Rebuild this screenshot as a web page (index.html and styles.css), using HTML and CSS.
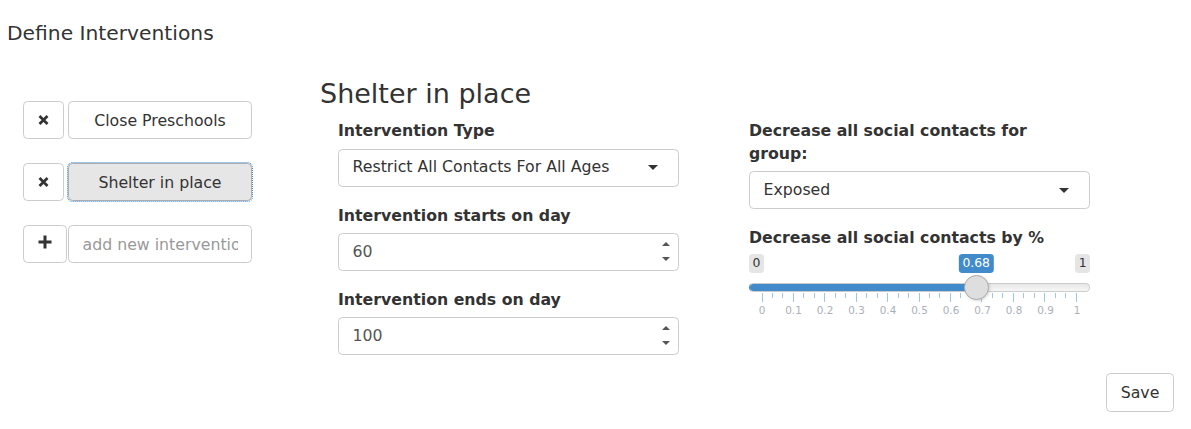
FILE: index.html
```html
<!DOCTYPE html>
<html lang="en">
<head>
<meta charset="utf-8">
<title>Define Interventions</title>
<link rel="stylesheet" href="styles.css">
</head>
<body>
<h4 class="page-title">Define Interventions</h4>
<div class="main">
  <div class="sidebar">
    <div class="row">
      <button class="btn btn-icon" type="button" aria-label="Remove">
        <svg width="11" height="10" viewBox="0 0 11 10"><path d="M1.5 1 L9.5 9 M9.5 1 L1.5 9" stroke="#333" stroke-width="2.7" fill="none"/></svg>
      </button>
      <button class="btn btn-name" type="button">Close Preschools</button>
    </div>
    <div class="row">
      <button class="btn btn-icon" type="button" aria-label="Remove">
        <svg width="11" height="10" viewBox="0 0 11 10"><path d="M1.5 1 L9.5 9 M9.5 1 L1.5 9" stroke="#333" stroke-width="2.7" fill="none"/></svg>
      </button>
      <button class="btn btn-name active" type="button">Shelter in place</button>
    </div>
    <div class="row">
      <button class="btn btn-icon btn-plus" type="button" aria-label="Add">
        <svg width="14" height="14" viewBox="0 0 14 14"><path d="M7 0.5 V13.5 M0.5 7 H13.5" stroke="#333" stroke-width="3" fill="none"/></svg>
      </button>
      <input class="new-input" type="text" placeholder="add new intervention">
    </div>
  </div>

  <div class="panel">
    <h3 class="panel-title">Shelter in place</h3>
    <div class="form">
      <div class="col">
        <div class="form-group">
          <label class="label">Intervention Type</label>
          <div class="select"><span>Restrict All Contacts For All Ages</span><span class="caret"></span></div>
        </div>
        <div class="form-group">
          <label class="label">Intervention starts on day</label>
          <div class="numbox"><input class="num-field" type="text" value="60"><span class="spin"><span class="up"></span><span class="down"></span></span></div>
        </div>
        <div class="form-group">
          <label class="label">Intervention ends on day</label>
          <div class="numbox"><input class="num-field" type="text" value="100"><span class="spin"><span class="up"></span><span class="down"></span></span></div>
        </div>
      </div>
      <div class="col">
        <div class="form-group">
          <label class="label">Decrease all social contacts for group:</label>
          <div class="select"><span>Exposed</span><span class="caret"></span></div>
        </div>
        <div class="form-group">
          <label class="label">Decrease all social contacts by %</label>
          <div class="slider" style="--v:0.68">
            <div class="minmax"><span class="irs-min">0</span><span class="irs-max">1</span></div>
            <span class="irs-single">0.68</span>
            <div class="track"><div class="bar"></div></div>
            <span class="handle"></span>
            <div class="grid">
              <i class="big"></i><i></i><i></i><i class="big"></i><i></i><i></i><i class="big"></i><i></i><i></i><i class="big"></i><i></i><i></i><i class="big"></i><i></i><i></i><i class="big"></i><i></i><i></i><i class="big"></i><i></i><i></i><i class="big"></i><i></i><i></i><i class="big"></i><i></i><i></i><i class="big"></i><i></i><i></i><i class="big"></i>
            </div>
            <div class="grid-text">
              <span><b>0</b></span><span><b>0.1</b></span><span><b>0.2</b></span><span><b>0.3</b></span><span><b>0.4</b></span><span><b>0.5</b></span><span><b>0.6</b></span><span><b>0.7</b></span><span><b>0.8</b></span><span><b>0.9</b></span><span><b>1</b></span>
            </div>
          </div>
        </div>
      </div>
    </div>
  </div>
</div>
<div class="footer">
  <button class="btn btn-save" type="button">Save</button>
</div>
</body>
</html>
```
FILE: styles.css
```css
* { box-sizing: border-box; }

body {
  margin: 0;
  font-family: "DejaVu Sans", sans-serif;
  font-size: 15.75px;
  line-height: 1.42857;
  color: #333;
  background: #fff;
}

.page-title {
  margin: 0;
  padding: 21.6px 0 0 7px;
  font-size: 20.25px;
  font-weight: 500;
  line-height: 1.1;
}

.main {
  display: flex;
  margin-top: 35.6px;
}

.sidebar {
  display: flex;
  flex-direction: column;
  gap: 23.75px;
  margin-top: 21.5px;
  padding-left: 23px;
}

.row {
  display: grid;
  grid-template-columns: 45px 184px;
  align-items: stretch;
}

.btn {
  display: inline-flex;
  align-items: center;
  justify-content: center;
  height: 38.25px;
  padding: 0 13.5px;
  font-family: inherit;
  font-size: 15.75px;
  color: #333;
  background: #fff;
  border: 1px solid #ccc;
  border-radius: 4.5px;
  cursor: pointer;
}

.btn-icon {
  width: 41px;
  padding: 0;
}

.btn-plus {
  width: 44px;
}

.btn-plus svg {
  margin-top: -5px;
}

.btn-name {
  width: 184px;
}

.btn-name.active {
  background: #e6e6e6;
  border-color: #adadad;
  outline: 1px dotted #3d8ed8;
  outline-offset: 0;
}

.new-input {
  width: 184px;
  height: 38.25px;
  padding: 0 13.5px;
  font-family: inherit;
  font-size: 15.75px;
  color: #555;
  border: 1px solid #ccc;
  border-radius: 4.5px;
}

.new-input::placeholder {
  color: #999;
}

.panel {
  margin-left: 68px;
}

.panel-title {
  margin: 0 0 11.25px;
  font-size: 27px;
  font-weight: 500;
  line-height: 1.1;
}

.form {
  display: flex;
  gap: 70px;
  padding-left: 18px;
}

.col {
  width: 341px;
}

.form-group {
  margin-bottom: 17.8px;
}

.label {
  display: block;
  margin-bottom: 5.625px;
  font-weight: bold;
}

.select {
  display: flex;
  align-items: center;
  justify-content: space-between;
  height: 38.25px;
  padding: 0 20px 0 13.5px;
  border: 1px solid #ccc;
  border-radius: 4.5px;
  color: #333;
  background: #fff;
}

.caret {
  width: 0;
  height: 0;
  border-left: 5.5px solid transparent;
  border-right: 5.5px solid transparent;
  border-top: 5.5px solid #333;
}

.numbox {
  display: flex;
  align-items: center;
  height: 38.25px;
  padding: 0 8px 0 13.5px;
  border: 1px solid #ccc;
  border-radius: 4.5px;
  background: #fff;
}

.num-field {
  flex: 1;
  min-width: 0;
  padding: 0;
  border: 0;
  outline: none;
  font-family: inherit;
  font-size: 15.75px;
  color: #555;
  background: transparent;
}

.spin {
  display: flex;
  flex-direction: column;
  justify-content: space-between;
  height: 19px;
}

.spin .up,
.spin .down {
  width: 0;
  height: 0;
  border-left: 4px solid transparent;
  border-right: 4px solid transparent;
}

.spin .up { border-bottom: 4.5px solid #555; }
.spin .down { border-top: 4.5px solid #555; }

/* slider */
.slider {
  position: relative;
  height: 66px;
  margin-top: -1px;
  font-size: 12.4px;
  line-height: 1.333;
  --inset: 13px;
}

.minmax {
  display: flex;
  justify-content: space-between;
}

.irs-min,
.irs-max {
  padding: 1px 3.4px;
  color: #333;
  background: rgba(0, 0, 0, 0.1);
  border-radius: 3.4px;
}

.irs-single {
  position: absolute;
  top: 0;
  left: calc(var(--inset) + var(--v) * (100% - 2 * var(--inset)));
  transform: translateX(-50%);
  padding: 1px 3.4px;
  color: #fff;
  background: #428bca;
  border-radius: 3.4px;
}

.track {
  position: relative;
  height: 9px;
  margin-top: 10.5px;
  border: 1px solid #ccc;
  border-left-color: #428bca;
  border-radius: 9px;
  background: linear-gradient(to bottom, #dedede -50%, #fff 150%);
  overflow: hidden;
}

.bar {
  width: calc(var(--inset) + var(--v) * (100% - 2 * var(--inset)));
  height: 100%;
  background: #428bca;
}

.handle {
  position: absolute;
  top: 21px;
  left: calc(var(--inset) + var(--v) * (100% - 2 * var(--inset)));
  width: 25px;
  height: 25px;
  margin-left: -12.5px;
  border: 1px solid #ababab;
  border-radius: 50%;
  background: #dedede;
  box-shadow: 1px 1px 3px rgba(0, 0, 0, 0.15);
}

.grid {
  display: flex;
  justify-content: space-between;
  align-items: flex-start;
  margin: 1px var(--inset) 0 calc(var(--inset) - 0.5px);
  height: 9px;
}

.grid i {
  width: 1px;
  height: 4.5px;
  background: #a1c5e4;
}

.grid i.big {
  height: 9px;
}

.grid-text {
  display: flex;
  justify-content: space-between;
  margin: 1.5px var(--inset) 0;
  font-size: 10.4px;
  color: #aab0b8;
}

.grid-text span {
  width: 0;
  display: flex;
  justify-content: center;
}

.grid-text b {
  font-weight: normal;
  white-space: nowrap;
}

.footer {
  display: flex;
  justify-content: flex-end;
  padding-right: 17px;
}

.btn-save {
  width: 68px;
  height: 39px;
}
```
